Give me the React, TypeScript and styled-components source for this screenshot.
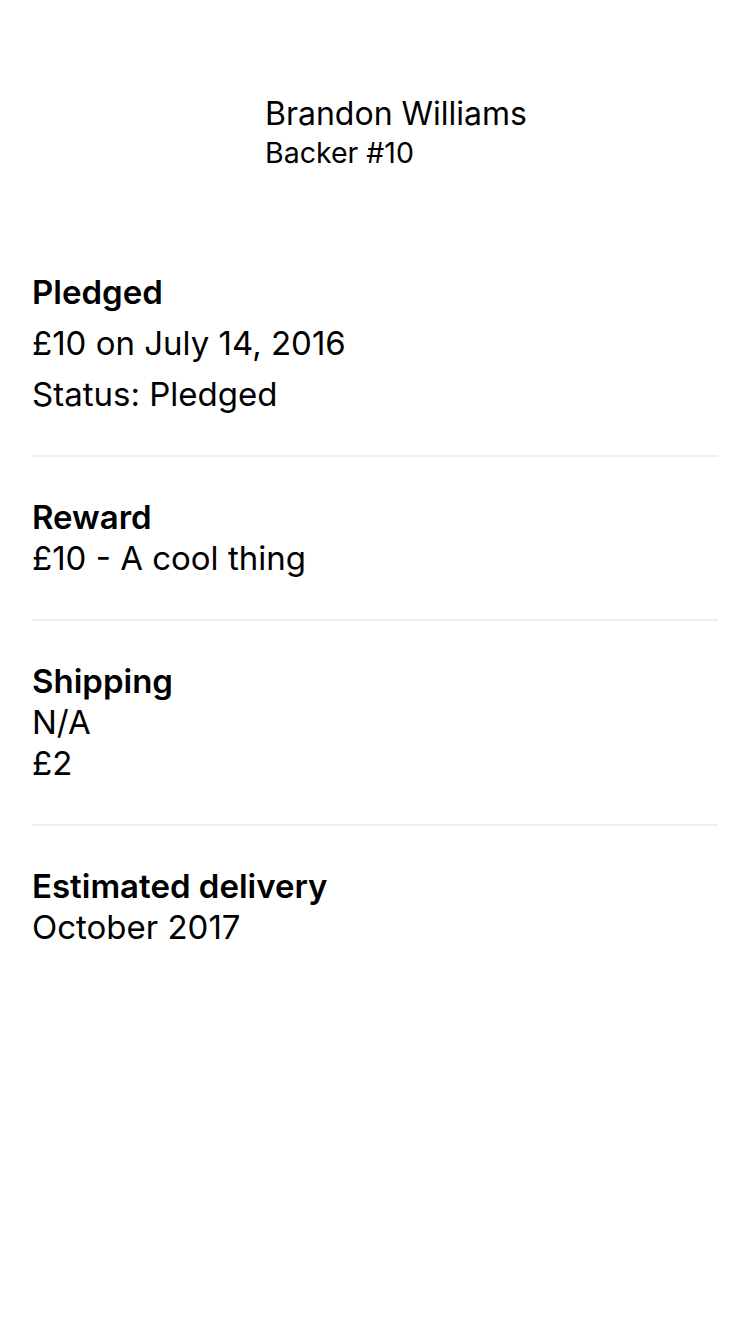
import React from "react";
import styled, { createGlobalStyle } from "styled-components";

const Global = createGlobalStyle`
  html, body { margin: 0; padding: 0; background: #ffffff; }
  body { font-family: Inter, "Noto Sans", "Liberation Sans", sans-serif; color: #000; -webkit-font-smoothing: antialiased; }
`;

const Page = styled.div`
  padding: 0 32px;
  min-height: 1334px;
  box-sizing: border-box;
`;

const Header = styled.header`
  display: flex;
  flex-direction: column;
  gap: 4px;
  padding: 95px 0 0 233px;
  margin-bottom: 64px;
`;

const Name = styled.div`
  font-size: 32px;
  line-height: 38px;
  font-weight: 400;
`;

const BackerNo = styled.div`
  font-size: 28.5px;
  line-height: 31px;
  font-weight: 400;
`;

const Section = styled.section<{ $last?: boolean }>`
  display: flex;
  flex-direction: column;
  padding: 40px 0;
  border-bottom: ${(p) => (p.$last ? "none" : "2px solid #efefef")};
`;

const Lines = styled.div<{ $gap?: number }>`
  display: flex;
  flex-direction: column;
  gap: ${(p) => p.$gap ?? 0}px;
`;

const Title = styled.div`
  font-size: 33px;
  line-height: 41px;
  font-weight: 600;
`;

const Line = styled.div`
  font-size: 33px;
  line-height: 41px;
  font-weight: 400;
`;

export default function App() {
  return (
    <>
      <Global />
      <Page>
        <Header>
          <Name>Brandon Williams</Name>
          <BackerNo>Backer #10</BackerNo>
        </Header>
        <Section>
          <Lines $gap={10}>
            <Title>Pledged</Title>
            <Line>£10 on July 14, 2016</Line>
            <Line>Status: Pledged</Line>
          </Lines>
        </Section>
        <Section>
          <Lines>
            <Title>Reward</Title>
            <Line>£10 - A cool thing</Line>
          </Lines>
        </Section>
        <Section>
          <Lines>
            <Title>Shipping</Title>
            <Line>N/A</Line>
            <Line>£2</Line>
          </Lines>
        </Section>
        <Section $last>
          <Lines>
            <Title>Estimated delivery</Title>
            <Line>October 2017</Line>
          </Lines>
        </Section>
      </Page>
    </>
  );
}
